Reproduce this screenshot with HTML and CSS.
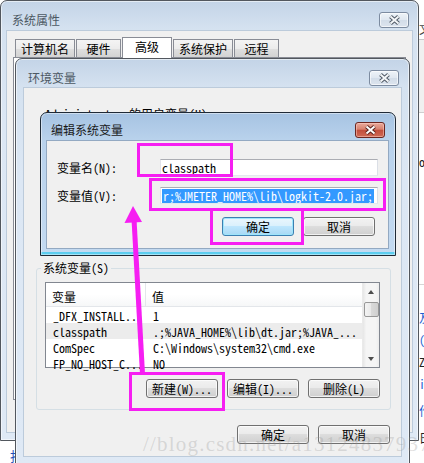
FILE: index.html
```html
<!DOCTYPE html>
<html lang="zh-CN">
<head>
<meta charset="utf-8">
<title>编辑系统变量</title>
<link rel="stylesheet" href="styles.css">
</head>
<body>
<div class="desk-right">
  <div class="dr-top"><span class="dr-t1">文</span></div>
  <div class="dr-gray"></div>
  <div class="dr-line dr-a">o</div>
  <div class="dr-sep"></div>
  <div class="dr-line dr-blue dr-b">及</div>
  <div class="dr-line dr-blue">(</div>
  <div class="dr-line">Z</div>
  <div class="dr-line dr-blue">i</div>
  <div class="dr-line dr-blue dr-c">作</div>
  <div class="dr-line dr-c">日</div>
</div>
<div class="desk-left">打开</div>

<div class="win win-sys">
  <div class="titlebar">
    <span class="title">系统属性</span>
    <span class="close"><svg width="13" height="10" viewBox="0 0 13 10"><path d="M2.5 1.5 L10.5 8.5 M10.5 1.5 L2.5 8.5" stroke="#505a66" stroke-width="4"/><path d="M2.5 1.5 L10.5 8.5 M10.5 1.5 L2.5 8.5" stroke="#f4f6f8" stroke-width="2"/></svg></span>
  </div>
  <div class="client sys-client">
    <div class="tabs">
      <span class="tab">计算机名</span><span class="tab">硬件</span><span class="tab tab-on">高级</span><span class="tab">系统保护</span><span class="tab">远程</span>
    </div>
    <div class="tabpanel"></div>
  </div>
</div>

<div class="win win-env">
  <div class="titlebar">
    <span class="title">环境变量</span>
    <span class="close"><svg width="13" height="10" viewBox="0 0 13 10"><path d="M2.5 1.5 L10.5 8.5 M10.5 1.5 L2.5 8.5" stroke="#505a66" stroke-width="4"/><path d="M2.5 1.5 L10.5 8.5 M10.5 1.5 L2.5 8.5" stroke="#f4f6f8" stroke-width="2"/></svg></span>
  </div>
  <div class="client env-client">
    <div class="user-label">Administrator 的用户变量(U)</div>
    <div class="user-spacer"></div>
    <fieldset class="group">
      <legend>系统变量(S)</legend>
      <div class="list">
        <div class="list-body">
          <div class="lv-head"><span class="c1">变量</span><span class="c2 c2-head">值</span></div>
          <div class="lv-row"><span class="c1">_DFX_INSTALL...</span><span class="c2">1</span></div>
          <div class="lv-row lv-sel"><span class="c1">classpath</span><span class="c2">.;%JAVA_HOME%\lib\dt.jar;%JAVA_...</span></div>
          <div class="lv-row"><span class="c1">ComSpec</span><span class="c2">C:\Windows\system32\cmd.exe</span></div>
          <div class="lv-row"><span class="c1">FP_NO_HOST_C...</span><span class="c2">NO</span></div>
        </div>
        <div class="vscroll">
          <span class="sb-btn"><span class="tri-up"></span></span>
          <span class="thumb"></span>
          <span class="sb-fill"></span>
          <span class="sb-btn"><span class="tri-down"></span></span>
        </div>
      </div>
      <div class="btnrow group-btns">
        <button class="btn">新建(W)...</button><button class="btn">编辑(I)...</button><button class="btn">删除(L)</button>
      </div>
    </fieldset>
    <div class="btnrow env-btns">
      <button class="btn">确定</button><button class="btn">取消</button>
    </div>
  </div>
</div>

<div class="win win-edit">
  <div class="titlebar">
    <span class="title">编辑系统变量</span>
    <span class="close close-red"><svg width="13" height="10" viewBox="0 0 13 10"><path d="M2.5 1.5 L10.5 8.5 M10.5 1.5 L2.5 8.5" stroke="#5a231d" stroke-width="4"/><path d="M2.5 1.5 L10.5 8.5 M10.5 1.5 L2.5 8.5" stroke="#ffffff" stroke-width="2"/></svg></span>
  </div>
  <div class="client edit-client">
    <div class="form">
      <span class="label">变量名(N):</span>
      <span class="field">classpath</span>
      <span class="label">变量值(V):</span>
      <span class="field"><span class="sel">r;%JMETER_HOME%\lib\logkit-2.0.jar;</span></span>
    </div>
    <div class="btnrow edit-btns">
      <button class="btn btn-def">确定</button><button class="btn">取消</button>
    </div>
  </div>
</div>

<div class="mark">//blog.csdn.net/a13124837937</div>

<div class="anno box1"></div>
<div class="anno box2"></div>
<div class="anno box3"></div>
<div class="anno box4"></div>
<svg class="arrow" width="424" height="463" viewBox="0 0 424 463">
  <line x1="142.5" y1="374" x2="134" y2="219" stroke="#f61ef2" stroke-width="5"/>
  <polygon points="133,206 124.5,223 142,222" fill="#f61ef2"/>
</svg>
</body>
</html>
```

FILE: styles.css
```css
* { box-sizing: border-box; }
html, body { margin: 0; padding: 0; }
body {
  width: 424px;
  height: 463px;
  overflow: hidden;
  position: relative;
  background: #fff;
  font-family: "Noto Sans Mono CJK SC", "Noto Sans CJK SC", "DejaVu Sans Mono", monospace;
  font-size: 12px;
  color: #000;
}

/* desktop fragments behind windows */
.desk-right {
  position: absolute;
  left: 419px;
  top: 0;
  width: 5px;
  height: 463px;
  overflow: hidden;
  display: flex;
  flex-direction: column;
  font-size: 12px;
  line-height: 14px;
  white-space: nowrap;
}
.dr-top { height: 40px; border-bottom: 1px solid #c9c9c9; padding-top: 22px; color: #444; }
.dr-gray { height: 73px; background: #f0f0f0; border-bottom: 1px solid #cfcfcf; flex: none; }
.dr-line { height: 14px; flex: none; margin-top: 8px; color: #222; }
.dr-a { margin-top: 42px; }
.dr-sep { height: 1px; background: #d6d6d6; margin-top: 115px; flex: none; }
.dr-b { margin-top: 26px; }
.dr-blue { color: #1f5fd1; }
.dr-c { margin-top: 13px; }
.desk-left {
  position: absolute;
  left: 10px;
  top: 448px;
  color: #1f4fb8;
  font-size: 13px;
  line-height: 15px;
}

/* generic window */
.win {
  position: absolute;
  display: flex;
  flex-direction: column;
  border: 1px solid #52575e;
  border-radius: 7px 7px 0 0;
  background: linear-gradient(#c3d4e7, #d5e2f0 28px, #dce7f4 120px, #dfe9f5);
  box-shadow: inset 0 0 0 1px rgba(255, 255, 255, 0.55);
}
.titlebar {
  flex: none;
  height: 30px;
  padding-top: 8px;
  display: flex;
  align-items: center;
  justify-content: space-between;
}
.title {
  font-family: "Noto Sans CJK SC", sans-serif;
  font-size: 12px;
  line-height: 16px;
  color: #4c5863;
  margin-left: 5px;
}
.close {
  width: 30px;
  height: 16px;
  margin-right: 3px;
  border: 1px solid #7c8ba0;
  border-radius: 3px;
  background: linear-gradient(#eef3f8, #dfe7f0 50%, #d2dce8 50%, #dce4ee);
  box-shadow: inset 0 0 0 1px rgba(255, 255, 255, 0.6);
  display: flex;
  align-items: center;
  justify-content: center;
}
.client {
  flex: 1;
  min-height: 0;
  background: #f0f0f0;
  box-shadow: 0 0 0 1px #bccbdb;
}

/* 系统属性 */
.win-sys { left: 0; top: 0; width: 419px; height: 441px; padding: 0 6px 8px 6px; }
.sys-client { padding: 6px 6px 0 6px; }
.tabs {
  display: flex;
  align-items: flex-end;
  gap: 1px;
  height: 20px;
  padding-left: 2px;
  position: relative;
  z-index: 1;
}
.tab {
  height: 18px;
  min-width: 45px;
  padding: 0 5px;
  border: 1px solid #898c95;
  border-bottom: none;
  background: linear-gradient(#f4f4f4, #ececec 50%, #dfdfdf 50%, #d3d3d3);
  display: flex;
  align-items: center;
  justify-content: center;
  line-height: 14px;
}
.tab-on {
  height: 21px;
  min-width: 50px;
  margin-bottom: -1px;
  background: #fff;
  padding-bottom: 2px;
}
.tabpanel {
  height: 343px;
  background: #fff;
  border: 1px solid #898c95;
}

/* 环境变量 */
.win-env { left: 15px; top: 58px; width: 395px; height: 415px; padding: 0 8px 16px 8px; }
.win-env .titlebar { height: 29px; }
.win-env .title { margin-left: 4px; }
.win-env .close { margin-right: 2px; }
.env-client { display: flex; flex-direction: column; }
.user-label { margin: 19px 0 0 21px; line-height: 14px; height: 14px; white-space: nowrap; }
.user-spacer { height: 140px; flex: none; }
.group {
  margin: 0 10px 0 12px;
  padding: 0 10px 11px 8px;
  border: 1px solid #d5dfe5;
  border-radius: 3px;
  min-width: 0;
}
.group legend { padding: 0 2px; margin-left: -4px; line-height: 14px; }
.list {
  margin-top: 7px;
  height: 86px;
  border: 1px solid #828790;
  background: #fff;
  display: flex;
}
.list-body { flex: 1; min-width: 0; display: flex; flex-direction: column; }
.lv-head {
  height: 24px;
  display: flex;
  align-items: center;
  padding-top: 3px;
  background: linear-gradient(#ffffff, #ffffff 50%, #f6f7f8);
  border-bottom: 1px solid #e3e6ea;
  flex: none;
}
.lv-row { height: 16px; display: flex; align-items: center; flex: none; white-space: nowrap; }
.lv-sel { background: #ececec; }
.c1 { width: 99px; padding-left: 7px; flex: none; overflow: hidden; }
.lv-head .c1 { padding-left: 6px; }
.c2 { padding-left: 8px; overflow: hidden; }
.c2-head { border-left: 1px solid #e3e6ea; align-self: stretch; margin-top: -3px; padding-top: 3px; padding-left: 6px; display: flex; align-items: center; }
.vscroll {
  width: 17px;
  flex: none;
  display: flex;
  flex-direction: column;
  align-items: center;
  background: linear-gradient(to right, #e6e6e6, #f5f5f5 20%, #f5f5f5 80%, #ececec);
  border-left: 1px solid #eaeaea;
}
.sb-btn { width: 16px; height: 17px; display: flex; align-items: center; justify-content: center; flex: none; }
.tri-up { width: 0; height: 0; border-left: 3.5px solid transparent; border-right: 3.5px solid transparent; border-bottom: 4px solid #4d4d4d; }
.tri-down { width: 0; height: 0; border-left: 3.5px solid transparent; border-right: 3.5px solid transparent; border-top: 4px solid #4d4d4d; }
.thumb {
  width: 15px;
  height: 15px;
  margin-top: 2px;
  border: 1px solid #979797;
  border-radius: 2px;
  background: linear-gradient(to right, #f3f3f3, #e8e8e8 50%, #d9d9d9 50%, #cfcfcf);
  flex: none;
}
.sb-fill { flex: 1; }

.btnrow { display: flex; justify-content: flex-end; gap: 9px; }
.btn {
  width: 72px;
  height: 19px;
  padding: 0;
  margin: 0;
  border: 1px solid #707070;
  border-radius: 3px;
  background: linear-gradient(#f2f2f2, #ebebeb 45%, #dddddd 50%, #cfcfcf);
  box-shadow: inset 0 0 0 1px rgba(255, 255, 255, 0.7);
  font: inherit;
  line-height: 15px;
  color: #000;
  display: flex;
  align-items: center;
  justify-content: center;
  white-space: nowrap;
}
.group-btns { margin-top: 11px; }
.env-btns { margin: 15px 11px 0 0; }

/* 编辑系统变量 (active) */
.win-edit {
  left: 40px;
  top: 112px;
  width: 356px;
  height: 144px;
  padding: 0 7px 7px 6px;
  border-color: #1f2a36;
  background: linear-gradient(#a6c3e2, #b9d2ec 27px, #c3daf1);
  box-shadow: inset 0 0 0 1px rgba(255, 255, 255, 0.45), inset 0 -3px 0 #5ccdef;
}
.win-edit .titlebar { height: 28px; padding-top: 6px; }
.win-edit .title { margin-left: 4px; color: #1a1a1a; }
.close-red {
  border-color: #6b2620;
  background: linear-gradient(#e9a99b, #d8826f 45%, #c24d3b 50%, #cf6a55);
  box-shadow: inset 0 0 0 1px rgba(255, 210, 200, 0.5);
}
.edit-client { padding: 18px 13px 12px 10px; box-shadow: 0 0 0 1px #93a9c2; }
.form {
  display: grid;
  grid-template-columns: 103px 218px;
  row-gap: 11px;
  align-items: center;
}
.label { line-height: 15px; white-space: nowrap; }
.field {
  height: 17px;
  background: #fff;
  border: 1px solid;
  border-color: #abadb3 #dbdfe6 #e3e9ef #e2e3ea;
  padding: 0 2px 0 1px;
  line-height: 14px;
  white-space: nowrap;
  overflow: hidden;
  display: flex;
  align-items: center;
}
.field:first-of-type { padding-left: 2px; }
.sel { background: #3399ff; color: #fff; padding: 0 1px; }
.edit-btns { margin-top: 13px; }
.btn-def {
  border-color: #3c7fb1;
  background: linear-gradient(#eaf6fd, #d9f0fc 50%, #bee6fd 50%, #a7d9f5);
  box-shadow: inset 0 0 0 1px #9ee5fb;
}

/* watermark + annotations (overlays) */
.mark {
  position: absolute;
  left: 143px;
  top: 434px;
  font-family: "Liberation Serif", serif;
  font-size: 21px;
  line-height: 21px;
  letter-spacing: 1.2px;
  color: rgba(150, 150, 150, 0.3);
  white-space: nowrap;
}
.anno { position: absolute; border: 3px solid #f61ef2; }
.box1 { left: 137px; top: 143px; width: 96px; height: 34px; }
.box2 { left: 149px; top: 178px; width: 237px; height: 33px; }
.box3 { left: 210px; top: 208px; width: 94px; height: 37px; }
.box4 { left: 129px; top: 372px; width: 96px; height: 39px; }
.arrow { position: absolute; left: 0; top: 0; pointer-events: none; }
```
